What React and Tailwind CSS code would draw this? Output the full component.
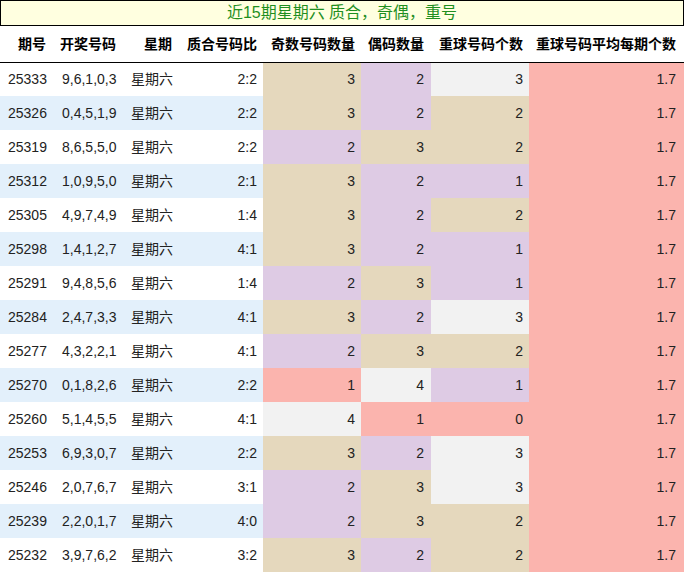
import React from "react";

// Pastel1 colours, mapped per column over that column's min..max
const TAN = "bg-[#e5d8bd]";
const PURPLE = "bg-[#decbe4]";
const GRAY = "bg-[#f2f2f2]";
const SALMON = "bg-[#fbb4ae]";

const oddColor = { 1: SALMON, 2: PURPLE, 3: TAN, 4: GRAY };
const repColor = { 0: SALMON, 1: PURPLE, 2: TAN, 3: GRAY };

const rows = [
  ["25333", "9,6,1,0,3", "2:2", 3, 2, 3],
  ["25326", "0,4,5,1,9", "2:2", 3, 2, 2],
  ["25319", "8,6,5,5,0", "2:2", 2, 3, 2],
  ["25312", "1,0,9,5,0", "2:1", 3, 2, 1],
  ["25305", "4,9,7,4,9", "1:4", 3, 2, 2],
  ["25298", "1,4,1,2,7", "4:1", 3, 2, 1],
  ["25291", "9,4,8,5,6", "1:4", 2, 3, 1],
  ["25284", "2,4,7,3,3", "4:1", 3, 2, 3],
  ["25277", "4,3,2,2,1", "4:1", 2, 3, 2],
  ["25270", "0,1,8,2,6", "2:2", 1, 4, 1],
  ["25260", "5,1,4,5,5", "4:1", 4, 1, 0],
  ["25253", "6,9,3,0,7", "2:2", 3, 2, 3],
  ["25246", "2,0,7,6,7", "3:1", 2, 3, 3],
  ["25239", "2,2,0,1,7", "4:0", 2, 3, 2],
  ["25232", "3,9,7,6,2", "3:2", 3, 2, 2],
];

const headers = [
  ["期号", "pr-[8px]"],
  ["开奖号码", "pr-[7px]"],
  ["星期", "pr-[7px]"],
  ["质合号码比", "pr-[6px]"],
  ["奇数号码数量", "pr-[6px]"],
  ["偶码数量", "pr-[7px]"],
  ["重球号码个数", "pr-[6px]"],
  ["重球号码平均每期个数", "pr-[8px]"],
];

export default function App() {
  return (
    <div className="w-[684px] bg-white font-['Liberation_Sans','Noto_Sans_CJK_SC',sans-serif] text-[14px] text-[#222]">
      <div className="flex h-[26px] items-center justify-center border border-black bg-[#ffffe0] text-[16px] leading-none text-[#1f8f1f]">
        近15期星期六 质合，奇偶，重号
      </div>
      <table className="w-[684px] table-fixed border-collapse">
        <colgroup>
          <col className="w-[54px]" />
          <col className="w-[69px]" />
          <col className="w-[56px]" />
          <col className="w-[84px]" />
          <col className="w-[98px]" />
          <col className="w-[70px]" />
          <col className="w-[98px]" />
          <col className="w-[155px]" />
        </colgroup>
        <thead>
          <tr className="h-[36px] border-b border-black">
            {headers.map(([h, pr]) => (
              <th key={h} className={"whitespace-nowrap p-0 pt-[2px] text-right font-bold text-black " + pr}>
                {h}
              </th>
            ))}
          </tr>
        </thead>
        <tbody>
          {rows.map(([no, nums, ratio, odd, even, rep], i) => {
            const stripe = i % 2 === 1 ? "bg-[#e3f0fb]" : "bg-white";
            return (
              <tr key={no} className="h-[34px]">
                <td className={"p-0 pl-[8px] " + stripe}>{no}</td>
                <td className={"p-0 pl-[8px] " + stripe}>{nums}</td>
                <td className={"p-0 pl-[8px] " + stripe}>星期六</td>
                <td className={"p-0 pr-[6px] text-right " + stripe}>{ratio}</td>
                <td className={"p-0 pr-[6px] text-right " + oddColor[odd]}>{odd}</td>
                <td className={"p-0 pr-[7px] text-right " + oddColor[even]}>{even}</td>
                <td className={"p-0 pr-[6px] text-right " + repColor[rep]}>{rep}</td>
                <td className={"p-0 pr-[8px] text-right " + SALMON}>1.7</td>
              </tr>
            );
          })}
        </tbody>
      </table>
    </div>
  );
}
